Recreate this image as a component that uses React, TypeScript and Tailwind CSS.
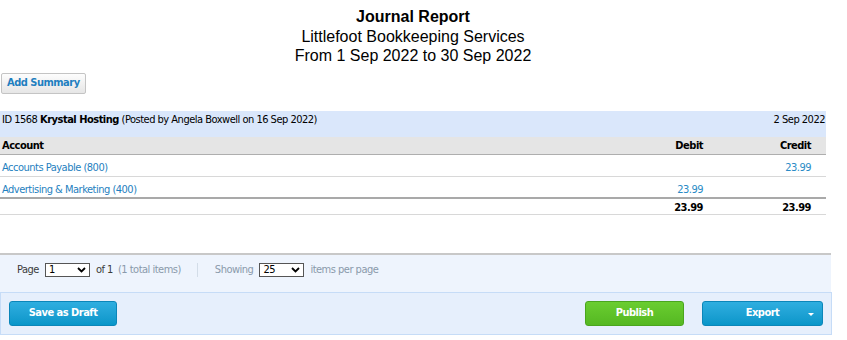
export default function App() {
  const ui = "font-['DejaVu_Sans_Condensed','DejaVu_Sans',sans-serif] tracking-[-0.5px]";

  return (
    <div className={`w-[847px] h-[340px] bg-white text-[11px] text-black ${ui}`}>
      {/* Report title */}
      <div className="w-[826px] pt-[7px] text-center font-['Liberation_Sans',Arial,sans-serif] tracking-normal text-[16px] leading-[19px]">
        <div className="font-bold mb-[1px]">Journal Report</div>
        <div>Littlefoot Bookkeeping Services</div>
        <div>From 1 Sep 2022 to 30 Sep 2022</div>
      </div>

      <div className="pt-[8px] pl-[1px]">
        <button className="h-[21px] px-[5px] rounded-[2px] border border-[#c4c4c4] bg-gradient-to-b from-[#fdfdfd] to-[#e6e6e6] text-[11px] font-bold text-[#1f7fc0]">
          Add Summary
        </button>
      </div>

      {/* Journal */}
      <div className="mt-[17px] w-[826px]">
        <div className="flex justify-between bg-[#dae7fb] h-[26px] pt-[2px] px-[2px] pr-[1px] leading-[14px]">
          <div>
            ID 1568 <span className="font-bold">Krystal Hosting</span> (Posted by Angela Boxwell on 16 Sep 2022)
          </div>
          <div>2 Sep 2022</div>
        </div>

        <div className="grid grid-cols-[1fr_100px_123px] bg-[#e5e5e5] h-[18px] border-b border-[#aeaeae] font-bold pt-[1px] leading-[16px]">
          <div className="pl-[2px]">Account</div>
          <div className="text-right">Debit</div>
          <div className="text-right pr-[15px]">Credit</div>
        </div>

        <div className="grid grid-cols-[1fr_100px_123px] h-[22px] border-b border-[#d8d8d8] pt-[6px] leading-[14px] text-[#1f7fc0]">
          <div className="pl-[2px]">Accounts Payable (800)</div>
          <div className="text-right text-[#2a8bc6]"></div>
          <div className="text-right pr-[15px] text-[#2a8bc6]">23.99</div>
        </div>

        <div className="grid grid-cols-[1fr_100px_123px] h-[22px] border-b-2 border-[#a9a9a9] pt-[6px] leading-[14px] text-[#1f7fc0]">
          <div className="pl-[2px]">Advertising &amp; Marketing (400)</div>
          <div className="text-right text-[#2a8bc6]">23.99</div>
          <div className="text-right pr-[15px]"></div>
        </div>

        <div className="grid grid-cols-[1fr_100px_123px] h-[16px] border-b border-[#d8d8d8] font-bold pt-[2px] leading-[14px]">
          <div></div>
          <div className="text-right">23.99</div>
          <div className="text-right pr-[15px]">23.99</div>
        </div>
      </div>

      {/* Pagination */}
      <div className="mt-[38px] w-[831px] h-[39px] border-t-2 border-[#c8c8c8] bg-[#eef4fd] pt-[8px] pl-[17px] text-[#3b3b3b]">
        <div className="flex items-center h-[14px]">
          <span>Page</span>
          <div className="ml-[6px] w-[45px] h-[14px] border border-[#555] bg-white flex items-center justify-between px-[3px] text-black leading-[12px]">
            <span>1</span>
            <Chevron />
          </div>
          <span className="ml-[6px]">of 1</span>
          <span className="ml-[5px] text-[#8a9aab]">(1 total items)</span>
          <div className="ml-[16px] w-px h-[14px] bg-[#d3dde8]"></div>
          <span className="ml-[17px] text-[#8a9aab]">Showing</span>
          <div className="ml-[6px] w-[45px] h-[14px] border border-[#555] bg-white flex items-center justify-between px-[3px] text-black leading-[12px]">
            <span>25</span>
            <Chevron />
          </div>
          <span className="ml-[6px] text-[#8a9aab]">items per page</span>
        </div>
      </div>

      {/* Actions */}
      <div className="w-[832px] h-[43px] border border-[#c6dcf7] bg-[#e6effc] flex items-center px-[8px]">
        <button className="w-[108px] h-[25px] rounded-[3px] border border-[#0b86b9] bg-gradient-to-b from-[#2eaee0] to-[#0796c9] text-white font-bold text-[11px]">
          Save as Draft
        </button>
        <div className="flex-1"></div>
        <button className="w-[99px] h-[25px] rounded-[3px] border border-[#4aa51e] bg-gradient-to-b from-[#6acd30] to-[#55b822] text-white font-bold text-[11px]">
          Publish
        </button>
        <button className="ml-[18px] w-[121px] h-[25px] rounded-[3px] border border-[#0b86b9] bg-gradient-to-b from-[#2eaee0] to-[#0796c9] text-white font-bold text-[11px] relative">
          Export
          <span className="absolute right-[8px] top-[11px] w-0 h-0 border-l-[3px] border-r-[3px] border-t-[3px] border-l-transparent border-r-transparent border-t-white"></span>
        </button>
      </div>
    </div>
  );
}

function Chevron() {
  return (
    <svg width="9" height="6" viewBox="0 0 9 6" fill="none">
      <path d="M1 1l3.5 3.5L8 1" stroke="#000" strokeWidth="1.8" />
    </svg>
  );
}
